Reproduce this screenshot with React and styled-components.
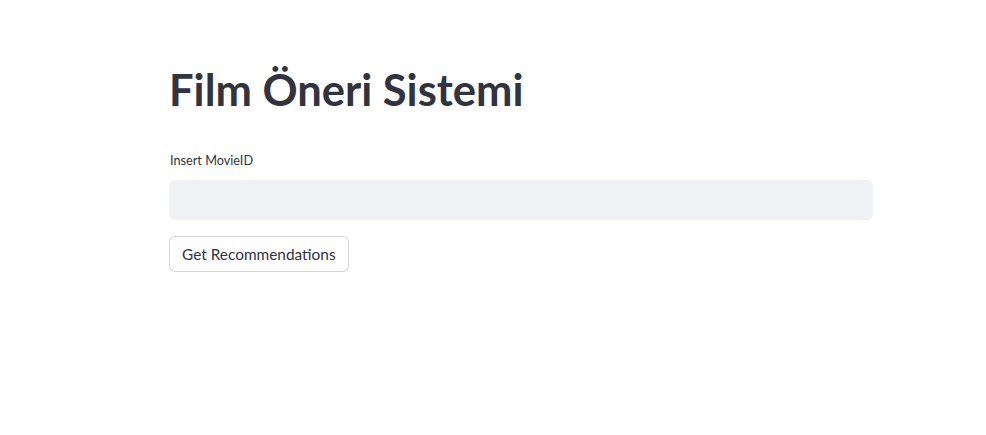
import React from "react";
import styled, { createGlobalStyle } from "styled-components";

const Global = createGlobalStyle`
  html, body { margin: 0; padding: 0; background: #ffffff; }
  body { font-family: Lato, "Noto Sans", sans-serif; color: #31333f; }
  * { box-sizing: border-box; }
`;

const Page = styled.main`
  width: 986px;
  min-height: 435px;
  padding: 61px 0 0 169px;
`;

const Block = styled.div`
  width: 704px;
  display: flex;
  flex-direction: column;
`;

const Title = styled.h1`
  margin: 0;
  font-family: Lato, "Noto Sans", sans-serif;
  font-weight: 700;
  font-size: 43.5px;
  line-height: 56px;
  color: #31333f;
  letter-spacing: 0;
`;

const Field = styled.div`
  margin-top: 34px;
  display: flex;
  flex-direction: column;
`;

const Label = styled.label`
  font-size: 12.7px;
  line-height: 18px;
  color: #31333f;
  margin-bottom: 11px;
  padding-left: 1px;
`;

const Input = styled.input`
  height: 40px;
  width: 100%;
  border: 1px solid #f0f2f6;
  border-radius: 6px;
  background: #f0f2f6;
  padding: 0 12px;
  font-family: inherit;
  font-size: 16px;
  color: #31333f;
  outline: none;
`;

const Button = styled.button`
  margin-top: 16px;
  align-self: flex-start;
  height: 36px;
  padding: 0 12px;
  background: #ffffff;
  border: 1px solid rgba(49, 51, 63, 0.2);
  border-radius: 6px;
  font-family: inherit;
  font-size: 15.4px;
  color: #31333f;
  cursor: pointer;
`;

export default function App() {
  return (
    <>
      <Global />
      <Page>
        <Block>
          <Title>Film Öneri Sistemi</Title>
          <Field>
            <Label htmlFor="movie">Insert MovieID</Label>
            <Input id="movie" type="text" />
          </Field>
          <Button>Get Recommendations</Button>
        </Block>
      </Page>
    </>
  );
}
